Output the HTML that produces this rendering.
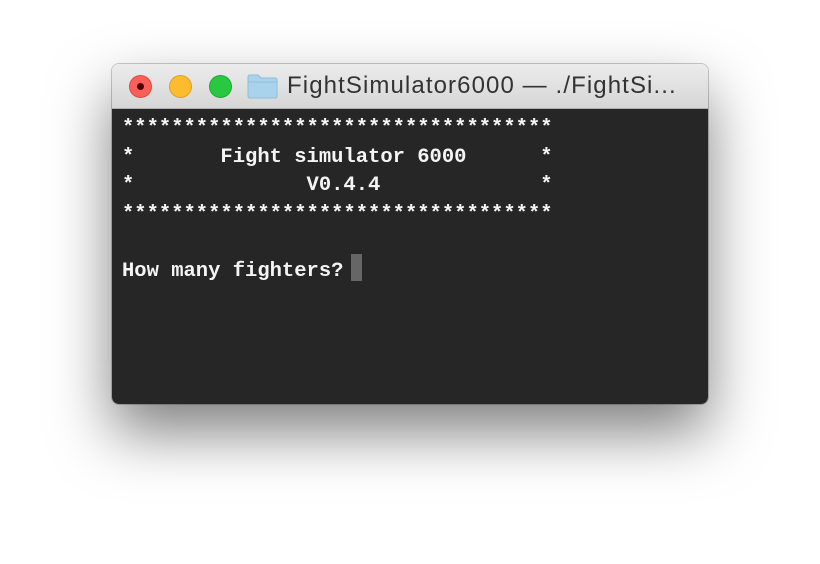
<!DOCTYPE html>
<html><head><style>
body{margin:0;width:820px;height:564px;background:#fff;overflow:hidden;position:relative;font-family:"Liberation Sans",sans-serif}
.win{position:absolute;left:112px;top:64px;width:596px;height:340px;border-radius:7px;overflow:hidden;box-shadow:0 28px 60px rgba(0,0,0,.5),0 0 0 1px rgba(0,0,0,.2)}
.tb{height:44px;background:linear-gradient(#ececec,#d6d6d6);border-bottom:1px solid #b0b0b0;position:relative}
.b{position:absolute;top:11px;width:22px;height:22px;border-radius:50%}
.t{position:absolute;left:175px;top:8px;font-size:24px;color:#333;white-space:nowrap;letter-spacing:1.1px}
.term{background:#262626;height:295px;position:relative;font-family:"Liberation Mono",monospace;font-weight:bold;font-size:20.5px;color:#f4f4f4;white-space:pre;line-height:28.5px}
.term pre{margin:0;position:absolute;left:10px;top:6px;font:inherit;line-height:inherit}
.cur{position:absolute;left:239px;top:145px;width:11px;height:27px;background:#666}
</style></head><body>
<div class="win">
<div class="tb">
<div class="b" style="left:17px;background:#fc5f57;border:1px solid #de4a41;width:21px;height:21px"><div style="position:absolute;left:7px;top:7px;width:7px;height:7px;border-radius:50%;background:#4d0000"></div></div>
<div class="b" style="left:57px;background:#fdbc2e;border:1px solid #dea123;width:21px;height:21px"></div>
<div class="b" style="left:97px;background:#28c840;border:1px solid #1eab2f;width:21px;height:21px"></div>
<svg style="position:absolute;left:135px;top:10px" width="31" height="25" viewBox="0 0 31 25"><path d="M1 3Q1 1 3 1H11L14 4H28Q30 4 30 6V23Q30 24 28 24H3Q1 24 1 22Z" fill="#a9d3ec" stroke="#8fbcd8"/><path d="M1 8H30" stroke="#8fbcd8"/></svg>
<div class="t">FightSimulator6000 — ./FightSi...</div>
</div>
<div class="term"><pre>***********************************
*       Fight simulator 6000      *
*              V0.4.4             *
***********************************

How many fighters? </pre><div class="cur"></div></div>
</div>
</body></html>
